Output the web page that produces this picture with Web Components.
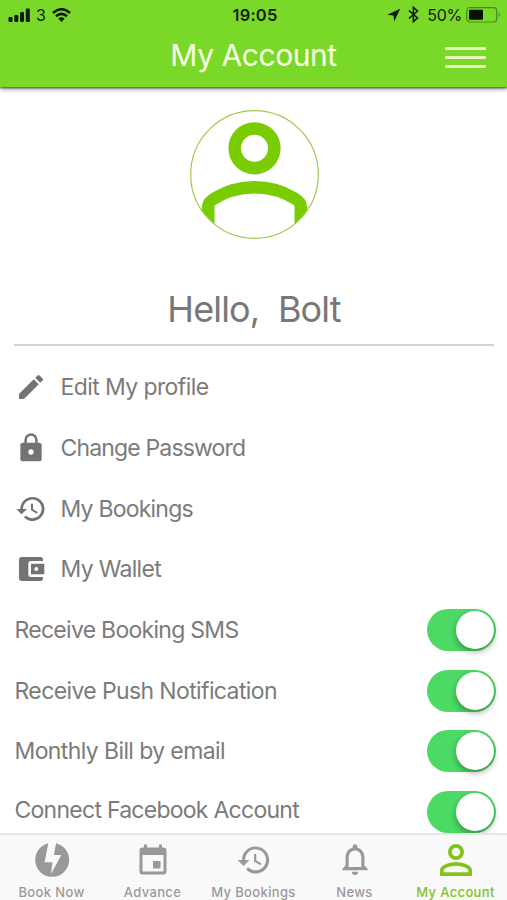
<!DOCTYPE html>
<html lang="en"><head><meta charset="utf-8"><title>My Account</title>
<style>
html,body{margin:0;height:100%;overflow:hidden;background:#fff;font-family:Inter,"Liberation Sans",sans-serif}
</style></head><body>
<account-app></account-app>
<script>
const define=(name,html,setup)=>customElements.define(name,class extends HTMLElement{
  constructor(){super();this.attachShadow({mode:'open'});}
  connectedCallback(){this.shadowRoot.innerHTML=html;if(setup)setup.call(this,this.shadowRoot);}
});
const HISTORY='M13 3a9 9 0 0 0-9 9H1l3.9 3.9.1.1L9 12H6a7 7 0 1 1 2.1 4.9l-1.4 1.4A9 9 0 1 0 13 3zm-1 5v5l4.3 2.5.7-1.2-3.5-2.1V8z';
const ICONS={
  edit:'M3 17.25V21h3.75L17.81 9.94l-3.75-3.75L3 17.25zM20.71 7.04a1 1 0 0 0 0-1.41l-2.34-2.34a1 1 0 0 0-1.41 0l-1.83 1.83 3.75 3.75 1.83-1.83z',
  lock:'M18 8h-1V6A5 5 0 0 0 7 6v2H6a2 2 0 0 0-2 2v10a2 2 0 0 0 2 2h12a2 2 0 0 0 2-2V10a2 2 0 0 0-2-2zm-6 9a2 2 0 1 1 0-4 2 2 0 0 1 0 4zm3.1-9H8.9V6a3.1 3.1 0 0 1 6.2 0v2z',
  history:HISTORY,
  wallet:'M21 18v1a2 2 0 0 1-2 2H5a2 2 0 0 1-2-2V5a2 2 0 0 1 2-2h14a2 2 0 0 1 2 2v1h-9a2 2 0 0 0-2 2v8a2 2 0 0 0 2 2h9zm-9-2h10V8H12v8zm4-2.5a1.5 1.5 0 1 1 0-3 1.5 1.5 0 0 1 0 3z',
  bolt:'M9.8 2.2A10 10 0 1 0 14.4 2.2L13.1 9H17.5L11.4 20.3L12.3 13.3H7.6Z',
  event:'M17 12h-5v5h5v-5zM16 1v2H8V1H6v2H5a2 2 0 0 0-2 2v14a2 2 0 0 0 2 2h14a2 2 0 0 0 2-2V5a2 2 0 0 0-2-2h-1V1h-2zm3 18H5V8h14v11z',
  bell:'M12 22a2 2 0 0 0 2-2h-4a2 2 0 0 0 2 2zm6-6v-5c0-3.07-1.63-5.64-4.5-6.32V4a1.5 1.5 0 0 0-3 0v.68C7.64 5.36 6 7.92 6 11v5l-2 2v1h16v-1l-2-2zm-2 1H8v-6c0-2.48 1.51-4.5 4-4.5s4 2.02 4 4.5v6z',
  person:'M12 5.9a2.1 2.1 0 1 1 0 4.2 2.1 2.1 0 0 1 0-4.2m0 9c2.97 0 6.1 1.46 6.1 2.1v1.1H5.9V17c0-.64 3.13-2.1 6.1-2.1M12 4a4 4 0 1 0 0 8 4 4 0 0 0 0-8zm0 9c-2.67 0-8 1.34-8 4v3h16v-3c0-2.66-5.33-4-8-4z'
};
const BOXES={bolt:'1.4 1.4 21.2 21.2',person:'3 3 18 18',bell:'0.6 1.1 22.8 22.8',event:'0 -0.6 24 24'};
define('app-icon',`<style>:host{display:block;flex:none}svg{display:block;width:100%;height:100%;fill:currentColor}</style><svg viewBox="0 0 24 24"><path/></svg>`,function(r){
  const name=this.getAttribute('name'); if(!name)return;
  r.querySelector('path').setAttribute('d',ICONS[name]);
  if(this.hasAttribute('tight')&&BOXES[name])r.querySelector('svg').setAttribute('viewBox',BOXES[name]);
});
define('status-bar',`<style>
:host{display:grid;grid-template-columns:1fr auto 1fr;align-items:center;height:29px;color:#12230a;font-size:16px;padding:0 5px 0 8px;box-sizing:border-box}
.l,.r{display:flex;align-items:center}.l{gap:5px}.r{justify-content:flex-end}
.time{font-weight:600;font-size:16.5px;letter-spacing:.2px}svg{display:block}.pct{letter-spacing:-.3px}
</style>
<div class="l"><svg width="23" height="14" fill="#0c1a06"><rect x="0.5" y="9" width="4" height="5" rx="1.2"/><rect x="6.3" y="7" width="4" height="7" rx="1.2"/><rect x="12" y="4" width="4" height="10" rx="1.2"/><rect x="17.8" y="0.5" width="4" height="13.5" rx="1.2"/></svg><span>3</span>
<svg style="margin-left:1px" width="19" height="14" viewBox="0 0 19 14" fill="none" stroke="#0c1a06" stroke-width="2.5"><path d="M1 5Q9.5-2.4 18 5M4 8.3Q9.5 3.4 15 8.3"/><path d="M6.3 10.6Q9.5 7.8 12.7 10.6L9.5 14Z" fill="#0c1a06" stroke="none"/></svg></div>
<span class="time">19:05</span>
<div class="r"><svg width="14" height="14" viewBox="0 0 14 14" fill="#0c1a06"><path d="M13.2.8L.3 6.7l6.2.9.7 6z"/></svg>
<svg style="margin:0 8px 0 7px" width="11" height="17" viewBox="0 0 11 17" fill="none" stroke="#0c1a06" stroke-width="1.6"><path d="M.9 4.5L9.5 12 5.4 15.6V1.4L9.5 5 .9 12.5"/></svg>
<span class="pct">50%</span>
<svg style="margin-left:4px" width="36" height="16" viewBox="0 0 36 16"><rect x=".7" y=".7" width="30" height="14.3" rx="3" fill="none" stroke="#458c1b" stroke-width="1.2"/><rect x="3" y="2.8" width="14" height="10" rx="1" fill="#071004"/><path d="M32.7 5.5q2.6 2.3 0 4.7z" fill="#458c1b"/></svg></div>`);
define('app-header',`<style>
:host{display:block;height:87px;background:#7ad829;box-shadow:0 1px 2px #4a5a40,0 2px 5px #0006;position:relative;z-index:1}
.bar{display:grid;grid-template-columns:62px 1fr 62px;align-items:center;height:51px}
h1{margin:0;text-align:center;color:#fbffe8;font-size:30px;font-weight:400;letter-spacing:-.45px;grid-column:2}
.menu{display:grid;gap:6.6px;width:41px;margin-top:6px}i{height:2.7px;background:#e3f7c5;border-radius:1px}
</style><status-bar></status-bar><div class="bar"><h1>My Account</h1><div class="menu"><i></i><i></i><i></i></div></div>`);
define('user-hero',`<style>
:host{display:flex;flex-direction:column;align-items:center;height:259px;margin:0 13px 0 14px;box-sizing:border-box;padding-top:22px;border-bottom:2px solid #d3d3d3}
svg{flex:none;display:block}h2{margin:42.5px 0 0;font-size:36px;line-height:52px;font-weight:400;color:#777;white-space:pre;letter-spacing:-.85px}
</style><svg width="131" height="131" viewBox="188.5 109 131 131"><defs><clipPath id="c"><circle cx="254" cy="174.5" r="63.8"/></clipPath></defs>
<g clip-path="url(#c)" fill="none" stroke="#79cc02"><circle cx="254" cy="148.3" r="19.8" stroke-width="12.6"/><path fill="#79cc02" stroke="none" d="M201.5 240V206Q202 198 212 192.5Q231 181 254 181T296 192.5Q306 198 306.5 206V240H294V205.5Q276 193.5 254 193.5T214 205.5V240Z"/></g><circle cx="254" cy="174.5" r="63.8" fill="none" stroke="#9ccb4b" stroke-width="1.2"/></svg><h2><slot></slot></h2>`);
define('menu-row',`<style>:host{display:flex;align-items:center;height:60.7px;padding-left:14.5px;gap:14px;font-size:23px;color:#7b7b7b;letter-spacing:var(--track,-.7px)}app-icon{width:32px;height:32px;color:#737373}</style><app-icon></app-icon><span><slot></slot></span>`,function(r){const i=r.querySelector('app-icon');i.setAttribute('name',this.getAttribute('icon'));i.connectedCallback();});
define('toggle-switch',`<style>:host{display:flex;justify-content:flex-end;box-sizing:border-box;width:69px;height:42px;padding:2px;border-radius:21px;background:#4cd964}i{width:38px;height:38px;border-radius:50%;background:#fff;box-shadow:0 3px 6px #0005}</style><i></i>`);
define('setting-row',`<style>:host{display:flex;align-items:center;justify-content:space-between;height:60.7px;padding:0 11px 0 14.5px;font-size:23px;color:#7b7b7b;letter-spacing:var(--track,-.7px)}span{padding-bottom:var(--lift,0)}</style><span><slot></slot></span><toggle-switch></toggle-switch>`);
define('tab-item',`<style>:host{display:flex;flex-direction:column;align-items:center;flex:1;font-size:13px;font-weight:500;color:#999;letter-spacing:.35px;white-space:nowrap}
:host([active]){color:#80c41c}app-icon{width:36px;height:36px;margin-top:7px}span{line-height:18px;margin-top:4.5px}</style><app-icon tight></app-icon><span><slot></slot></span>`,function(r){const i=r.querySelector('app-icon');i.setAttribute('name',this.getAttribute('icon'));i.connectedCallback();});
define('tab-bar',`<style>:host{display:grid;grid-template-columns:repeat(5,101px);padding-left:1px;box-sizing:border-box;height:67px;background:#f9f9f9;border-top:2px solid #e6e6e6;position:relative;z-index:1}</style><slot></slot>`);
define('account-app',`<style>:host{display:flex;flex-direction:column;height:900px;width:507px;overflow:hidden}main{height:746px;overflow:hidden}.list{padding-top:11px}</style>
<app-header></app-header><main><user-hero>Hello,&nbsp; Bolt</user-hero><div class="list">
<menu-row icon="edit" style="--track:-.6px">Edit My profile</menu-row><menu-row icon="lock" style="--track:-.84px">Change Password</menu-row><menu-row icon="history" style="--track:-.78px">My Bookings</menu-row><menu-row icon="wallet">My Wallet</menu-row>
<setting-row style="--track:-.72px">Receive Booking SMS</setting-row><setting-row style="--track:-.62px">Receive Push Notification</setting-row><setting-row style="--track:-.61px">Monthly Bill by email</setting-row><setting-row style="--lift:4px;--track:-.74px">Connect Facebook Account</setting-row></div></main>
<tab-bar><tab-item icon="bolt">Book Now</tab-item><tab-item icon="event">Advance</tab-item><tab-item icon="history">My Bookings</tab-item><tab-item icon="bell">News</tab-item><tab-item icon="person" active>My Account</tab-item></tab-bar>`);
</script></body></html>
